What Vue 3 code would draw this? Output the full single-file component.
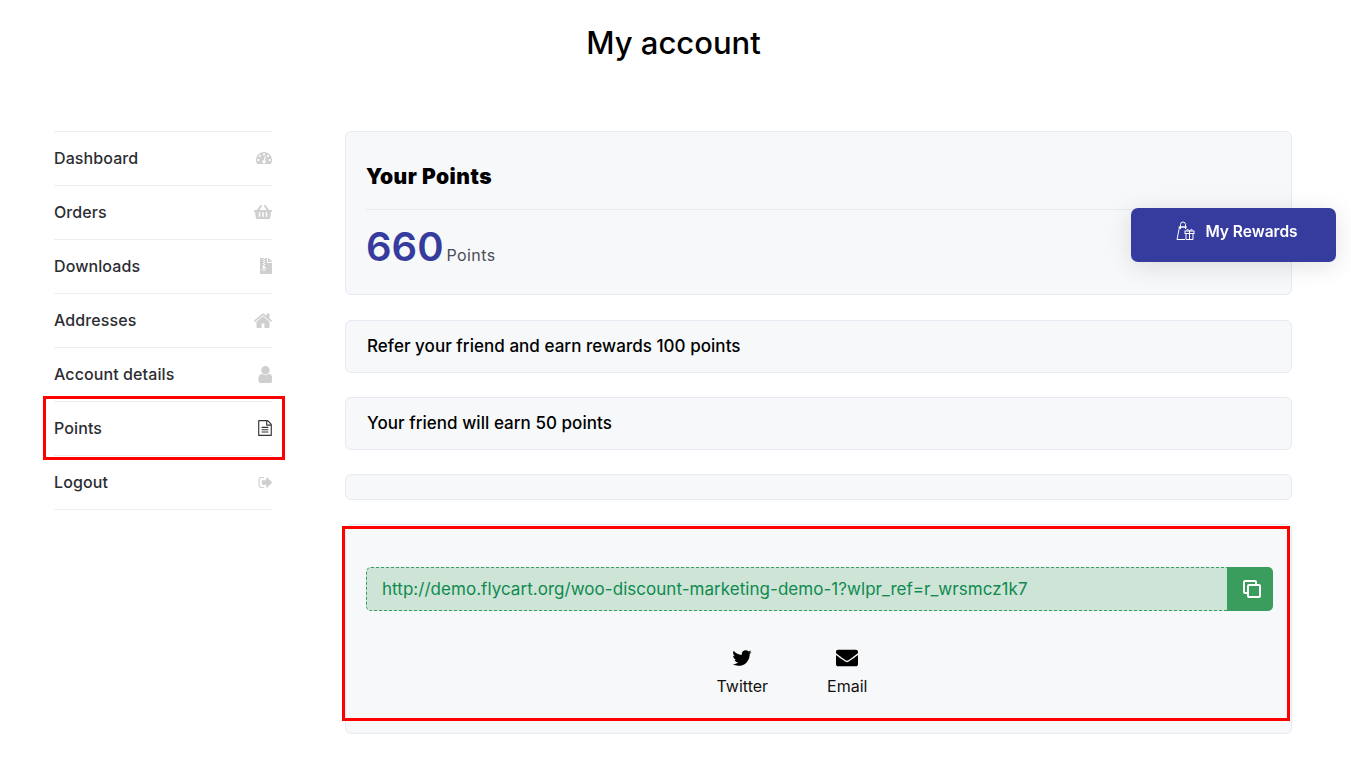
<script setup>
const nav = [
  { label: 'Dashboard', box: '0 256 1792 1344', w: 16, h: 12, d: 'M384 1152q0-53-37.500-90.500t-90.500-37.500-90.500 37.500-37.500 90.500 37.500 90.500 90.500 37.500 90.500-37.500 37.500-90.500zm192-448q0-53-37.500-90.500t-90.500-37.500-90.500 37.500-37.500 90.500 37.500 90.500 90.500 37.500 90.500-37.500 37.500-90.500zm428 481l101-382q6-26-7.500-48.500t-38.500-29.500-48 6.500-30 39.500l-101 382q-60 5-107 43.500t-63 98.500q-20 77 20 146t117 89 146-20 89-117q16-60-6-117t-72-91zm660-33q0-53-37.500-90.500t-90.500-37.500-90.500 37.500-37.500 90.500 37.500 90.500 90.500 37.500 90.500-37.500 37.500-90.500zm-640-640q0-53-37.500-90.500t-90.500-37.500-90.500 37.500-37.500 90.500 37.500 90.500 90.500 37.500 90.500-37.500 37.500-90.500zm448 192q0-53-37.500-90.500t-90.500-37.500-90.500 37.500-37.500 90.500 37.500 90.500 90.500 37.500 90.500-37.500 37.500-90.500zm320 448q0 261-141 483-19 29-54 29h-1402q-35 0-54-29-141-221-141-483 0-182 71-348t191-286 286-191 348-71 348 71 286 191 191 286 71 348z' },
  { label: 'Orders', box: '0 32 576 448', w: 18, h: 14, d: 'M576 216v16c0 13.255-10.745 24-24 24h-8l-26.113 182.788C514.509 462.435 494.257 480 470.370 480H105.630c-23.887 0-44.139-17.565-47.518-41.212L32 256h-8c-13.255 0-24-10.745-24-24v-16c0-13.255 10.745-24 24-24h67.341l106.780-146.821c10.395-14.292 30.407-17.453 44.701-7.058 14.293 10.395 17.453 30.408 7.058 44.701L170.477 192h235.046L326.120 82.821c-10.395-14.292-7.234-34.306 7.059-44.701 14.291-10.395 34.306-7.235 44.701 7.058L484.659 192H552c13.255 0 24 10.745 24 24zM312 392V280c0-13.255-10.745-24-24-24s-24 10.745-24 24v112c0 13.255 10.745 24 24 24s24-10.745 24-24zm112 0V280c0-13.255-10.745-24-24-24s-24 10.745-24 24v112c0 13.255 10.745 24 24 24s24-10.745 24-24zm-224 0V280c0-13.255-10.745-24-24-24s-24 10.745-24 24v112c0 13.255 10.745 24 24 24s24-10.745 24-24z' },
  { label: 'Downloads', box: '0 0 384 512', w: 12, h: 16, d: 'M377 105L279.100 7c-4.500-4.500-10.600-7-17-7H256v128h128v-6.100c0-6.200-2.500-12.300-7-16.900zM128.400 336c-17.900 0-32.400 12.100-32.400 27 0 15 14.600 27 32.500 27s32.400-12.100 32.400-27-14.600-27-32.500-27zM224 136V0h-63.600v32h-32V0H24C10.700 0 0 10.700 0 24v464c0 13.300 10.700 24 24 24h336c13.300 0 24-10.700 24-24V160H248c-13.200 0-24-10.800-24-24zM95.900 32h32v32h-32zm32.300 384c-33.200 0-58-30.400-51.400-62.900L96.400 256v-32h32v-32h-32v-32h32v-32h-32V96h32V64h32v32h-32v32h32v32h-32v32h32v32h-32v32h22.100c5.700 0 10.700 4.100 11.800 9.700l17.300 87.700c6.400 32.400-18.400 62.600-51.400 62.600z' },
  { label: 'Addresses', box: '97 224 1598 1312', w: 18, h: 15, d: 'M1472 992v480q0 26-19 45t-45 19h-384v-384h-256v384h-384q-26 0-45-19t-19-45v-480q0-1 .5-3t.5-3l575-474 575 474q1 2 1 6zm223-69l-62 74q-8 9-21 11h-3q-13 0-21-7l-692-577-692 577q-12 8-24 7-13-2-21-11l-62-74q-8-10-7-23.500t11-21.500l719-599q32-26 76-26t76 26l244 204v-195q0-14 9-23t23-9h192q14 0 23 9t9 23v408l219 182q10 8 11 21.500t-7 23.500z' },
  { label: 'Account details', box: '128 128 1408 1536', w: 15.500, h: 17, d: 'M1536 1399q0 109-62.500 187t-150.500 78h-854q-88 0-150.500-78t-62.500-187q0-85 8.500-160.500t31.500-152 58.500-131 94-89 134.500-34.500q131 128 313 128t313-128q76 0 134.500 34.500t94 89 58.500 131 31.500 152 8.500 160.500zm-256-887q0 159-112.500 271.500t-271.500 112.500-271.500-112.500-112.500-271.500 112.500-271.500 271.500-112.500 271.500 112.500 112.500 271.500z' },
  { label: 'Points', active: true, box: '128 0 1536 1792', w: 14, h: 16, d: 'M1596 380q28 28 48 76t20 88v1152q0 40-28 68t-68 28h-1344q-40 0-68-28t-28-68v-1600q0-40 28-68t68-28h896q40 0 88 20t76 48zm-444-244v376h376q-10-29-22-41l-313-313q-12-12-41-22zm384 1528v-1024h-416q-40 0-68-28t-28-68v-416h-768v1536h1280zm-1024-864q0-14 9-23t23-9h704q14 0 23 9t9 23v64q0 14-9 23t-23 9h-704q-14 0-23-9t-9-23v-64zm736 224q14 0 23 9t9 23v64q0 14-9 23t-23 9h-704q-14 0-23-9t-9-23v-64q0-14 9-23t23-9h704zm0 256q14 0 23 9t9 23v64q0 14-9 23t-23 9h-704q-14 0-23-9t-9-23v-64q0-14 9-23t23-9h704z' },
  { label: 'Logout', box: '0 256 1632 1280', w: 14, h: 11, d: 'M704 1440q0 4 1 20t.5 26.500-3 23.500-10 19.500-20.500 6.500h-320q-119 0-203.500-84.500t-84.500-203.500v-704q0-119 84.500-203.500t203.500-84.500h320q13 0 22.500 9.500t9.500 22.500q0 4 1 20t.5 26.500-3 23.500-10 19.500-20.500 6.500h-320q-66 0-113 47t-47 113v704q0 66 47 113t113 47h312l11.500 1 11.500 3 8 5.500 7 9 2 13.500zm928-544q0 26-19 45l-544 544q-19 19-45 19t-45-19-19-45v-288h-448q-26 0-45-19t-19-45v-384q0-26 19-45t45-19h448v-288q0-26 19-45t45-19 45 19l544 544q19 19 19 45z' }
]
</script>

<template>
  <div class="page">
    <h1 class="title">My account</h1>
    <div class="layout">
      <nav class="nav">
        <a v-for="item in nav" :key="item.label" class="nav-item" :class="{ active: item.active }">
          <span>{{ item.label }}</span>
          <svg class="nav-icon" :viewBox="item.box" :width="item.w" :height="item.h" fill="currentColor"><path :d="item.d" /></svg>
        </a>
      </nav>
      <main class="main">
        <section class="card points-card">
          <h2 class="points-title">Your Points</h2>
          <div class="points-value"><strong>660</strong><span>Points</span></div>
        </section>
        <section class="card line-card">Refer your friend and earn rewards 100 points</section>
        <section class="card line-card">Your friend will earn 50 points</section>
        <section class="card empty-card"></section>
        <section class="card share-card">
          <div class="link-row">
            <div class="link-text">http://demo.flycart.org/woo-discount-marketing-demo-1?wlpr_ref=r_wrsmcz1k7</div>
            <button class="copy" aria-label="Copy">
              <svg viewBox="0 0 18 18" width="18" height="18" fill="none" stroke="#fff" stroke-width="2"><path d="M4 13H2a1 1 0 0 1-1-1V2a1 1 0 0 1 1-1h10a1 1 0 0 1 1 1v2" /><rect x="5" y="5" width="12" height="12" rx="1" /></svg>
            </button>
          </div>
          <div class="socials">
            <a class="social">
              <svg viewBox="0 0 1792 1792" width="22" height="22" fill="#000"><path d="M1684 408q-67 98-162 167 1 14 1 42 0 130-38 259.500t-115.500 248.500-184.500 210.500-258 146-323 54.500q-271 0-496-145 35 4 78 4 225 0 401-138-105-2-188-64.500t-114-159.500q33 5 61 5 43 0 85-11-112-23-185.500-111.500t-73.500-205.500v-4q68 38 146 41-66-44-105-115t-39-154q0-88 44-163 121 149 294.500 238.500t371.500 99.500q-8-38-8-74 0-134 94.500-228.500t228.500-94.500q140 0 236 102 109-21 205-78-37 115-142 178 92-10 184-50z" /></svg>
              <span>Twitter</span>
            </a>
            <a class="social">
              <svg viewBox="0 0 512 512" width="22" height="22" fill="#000"><path d="M502.300 190.800c3.900-3.100 9.700-.2 9.700 4.700V400c0 26.500-21.500 48-48 48H48c-26.500 0-48-21.500-48-48V195.600c0-5 5.700-7.800 9.700-4.700 22.400 17.400 52.100 39.500 154.100 113.600 21.100 15.400 56.700 47.800 92.200 47.600 35.700.3 72-32.800 92.300-47.600 102-74.100 131.600-96.300 154-113.700zM256 320c23.200.4 56.600-29.200 73.400-41.400 132.700-96.300 142.800-104.700 173.400-128.700 5.800-4.500 9.200-11.500 9.200-18.900v-19c0-26.500-21.500-48-48-48H48C21.500 64 0 85.500 0 112v19c0 7.400 3.400 14.300 9.200 18.900 30.600 23.900 40.700 32.400 173.400 128.700 16.800 12.200 50.200 41.800 73.400 41.400z" /></svg>
              <span>Email</span>
            </a>
          </div>
          <div class="highlight"></div>
        </section>
      </main>
    </div>
    <button class="rewards">
      <svg viewBox="0 0 20 20" width="20" height="20" fill="none" stroke="#fff" stroke-width="1">
        <path d="M10 6H4.500L2 18.500h8" />
        <path d="M5.500 8V3.500a2.500 2.500 0 0 1 5 0V8" />
        <path d="M3.500 6h8.500" />
        <rect x="10" y="10" width="9" height="2.500" />
        <path d="M11 12.500v6h7v-6M14.500 10v8.500M14.500 10c-2-3-4-1-2 0M14.500 10c2-3 4-1 2 0" />
      </svg>
      <span>My Rewards</span>
    </button>
  </div>
</template>

<style scoped>
.page {
  font-family: Inter, "Liberation Sans", sans-serif;
  color: #222;
  background: #fff;
  height: 757px;
  overflow: hidden;
  box-sizing: border-box;
}
.title {
  margin: 0;
  height: 131px;
  padding: 23px 4px 0 0;
  box-sizing: border-box;
  font-size: 31px;
  line-height: 40px;
  font-weight: 500;
  color: #000;
  text-align: center;
}
.layout {
  display: flex;
  gap: 73px;
  padding-left: 54px;
}
.nav {
  width: 218px;
  display: flex;
  flex-direction: column;
  border-bottom: 1px solid #eeeeee;
  align-self: flex-start;
}
.nav-item {
  position: relative;
  height: 54px;
  box-sizing: border-box;
  border-top: 1px solid #eeeeee;
  padding-bottom: 2px;
  display: flex;
  align-items: center;
  justify-content: space-between;
  font-size: 16px;
  font-weight: 500;
  letter-spacing: 0.1px;
  color: #2c2d33;
}
.nav-icon {
  color: #cfcfcf;
  margin-top: 1px;
}
.nav-item.active .nav-icon {
  color: #333;
}
.nav-item.active::after {
  content: "";
  position: absolute;
  left: -11px;
  top: -6px;
  width: 242px;
  height: 64px;
  border: 3px solid #f00;
  box-sizing: border-box;
}
.main {
  width: 947px;
  display: flex;
  flex-direction: column;
  gap: 24px;
}
.card {
  background: #f7f8fa;
  border: 1px solid #e7e9f3;
  border-radius: 6px;
  box-sizing: border-box;
}
.points-card {
  height: 164px;
  margin-bottom: 1px;
  padding: 0 20px;
}
.points-title {
  margin: 0;
  height: 78px;
  padding-top: 30px;
  box-sizing: border-box;
  border-bottom: 1px solid #e7e9f3;
  font-size: 21px;
  line-height: 30px;
  font-weight: 900;
  letter-spacing: 0.5px;
  color: #000;
}
.points-value {
  display: flex;
  align-items: flex-end;
  gap: 3px;
  margin-top: 10px;
}
.points-value strong {
  font-size: 40px;
  line-height: 54px;
  font-weight: 600;
  color: #363c9d;
}
.points-value span {
  font-size: 16px;
  line-height: 20px;
  padding-bottom: 9px;
  letter-spacing: 0.4px;
  color: #4a4d57;
}
.line-card {
  height: 53px;
  padding: 0 0 2px 21px;
  display: flex;
  align-items: center;
  font-size: 17px;
  font-weight: 500;
  letter-spacing: 0.04px;
  color: #000;
}
.empty-card {
  height: 26px;
}
.share-card {
  position: relative;
  height: 210px;
  padding: 42px 18px 0 20px;
}
.link-row {
  display: flex;
  height: 44px;
}
.link-text {
  flex: 1;
  background: #cde4d6;
  border: 1px dashed #3a9c5f;
  border-right: none;
  border-radius: 5px 0 0 5px;
  padding-left: 15px;
  display: flex;
  align-items: center;
  font-size: 17px;
  letter-spacing: 0.04px;
  color: #0f8a50;
}
.copy {
  width: 46px;
  padding: 0 0 0 4px;
  border: none;
  border-radius: 0 5px 5px 0;
  background: #3a9d5d;
  display: flex;
  align-items: center;
  justify-content: center;
}
.socials {
  display: flex;
  justify-content: center;
  gap: 59px;
  margin-top: 36px;
  padding-right: 55px;
}
.social {
  display: flex;
  flex-direction: column;
  align-items: center;
  gap: 6px;
  font-size: 16px;
  line-height: 22px;
  color: #111;
}
.highlight {
  position: absolute;
  left: -4px;
  top: 1px;
  width: 948px;
  height: 195px;
  border: 3px solid #f00;
  box-sizing: border-box;
}
.rewards {
  position: fixed;
  left: 1131px;
  top: 208px;
  width: 205px;
  height: 54px;
  padding: 0 0 8px 6px;
  border: none;
  border-radius: 7px;
  background: #363c9d;
  box-shadow: 0 4px 24px rgba(0, 0, 0, 0.12);
  display: flex;
  align-items: center;
  justify-content: center;
  gap: 10px;
  font-family: inherit;
  font-size: 15.500px;
  font-weight: 600;
  color: #fff;
}
</style>
